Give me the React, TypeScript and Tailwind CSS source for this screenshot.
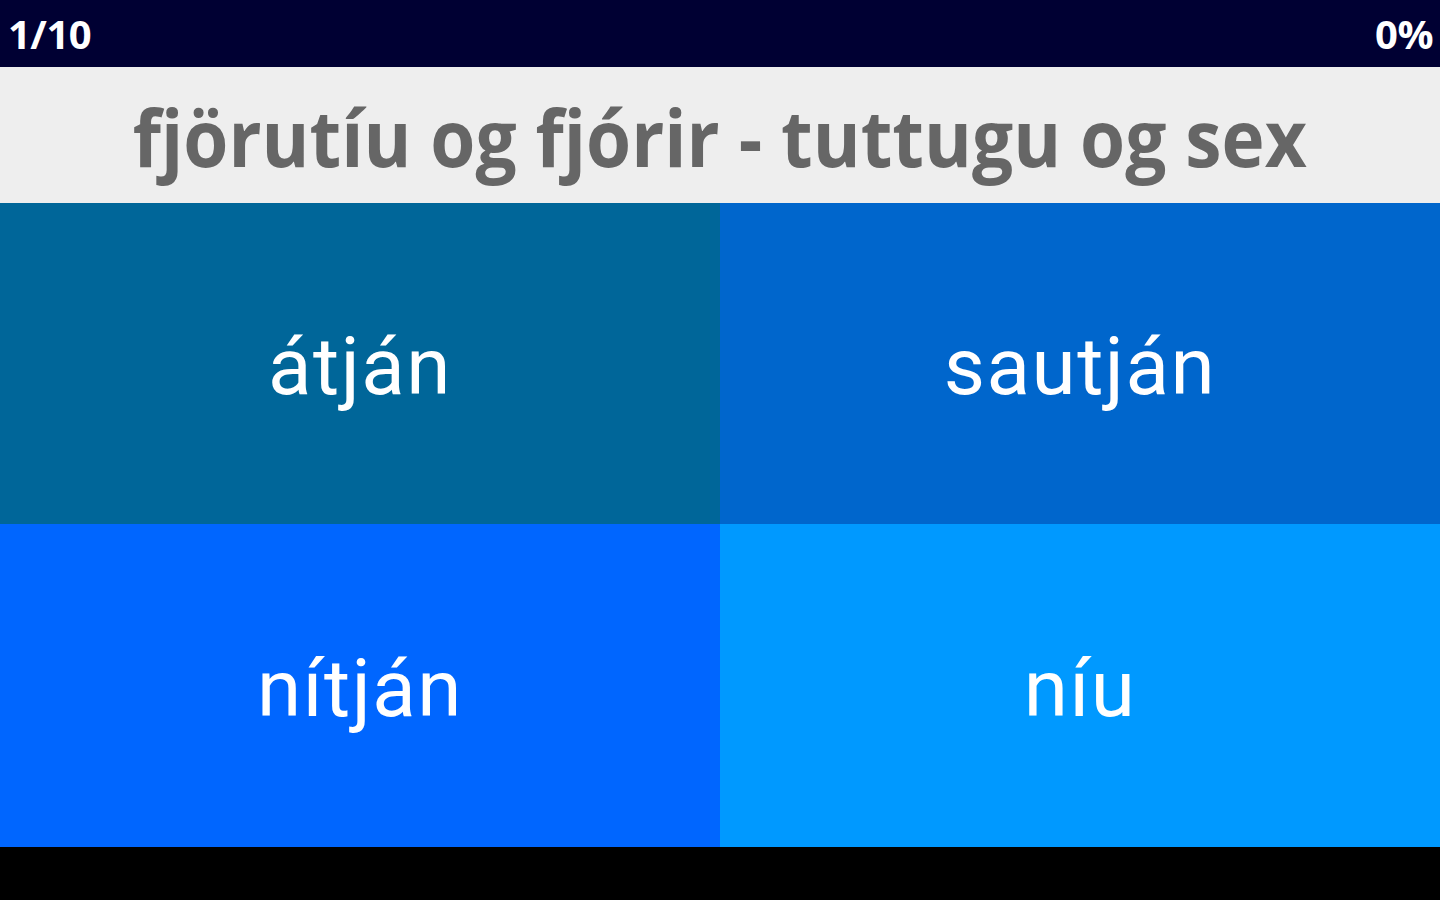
import React from "react";

const cells = [
  { text: "átján", bg: "bg-[#006699]" },
  { text: "sautján", bg: "bg-[#0066cc]" },
  { text: "nítján", bg: "bg-[#0066ff]" },
  { text: "níu", bg: "bg-[#0099ff]" },
];

export default function App() {
  return (
    <div className="w-[1440px] h-[900px] flex flex-col bg-black overflow-hidden">
      <div className="h-[67px] bg-[#000033] flex items-center justify-between pl-[8px] pr-[7px] text-white font-bold text-[40px] leading-none tracking-[-0.5px]" style={{ fontFamily: '"Open Sans", sans-serif' }}>
        <span>1/10</span>
        <span>0%</span>
      </div>
      <div className="h-[136px] bg-[#eeeeee] flex items-center justify-center text-[#666666] font-bold text-[78px] leading-none" style={{ fontFamily: '"Open Sans", sans-serif' }}>
        <span className="mt-[3px] inline-block whitespace-nowrap scale-x-[0.935]">fjörutíu og fjórir - tuttugu og sex</span>
      </div>
      <div className="grid grid-cols-2 grid-rows-[321px_323px]">
        {cells.map((c) => (
          <div key={c.text} className={`${c.bg} flex items-center justify-center text-white text-[80px] leading-none tracking-[1.5px]`} style={{ fontFamily: 'Roboto, sans-serif' }}>
            <span className="mt-[6px]">{c.text}</span>
          </div>
        ))}
      </div>
      <div className="flex-1 bg-black" />
    </div>
  );
}
